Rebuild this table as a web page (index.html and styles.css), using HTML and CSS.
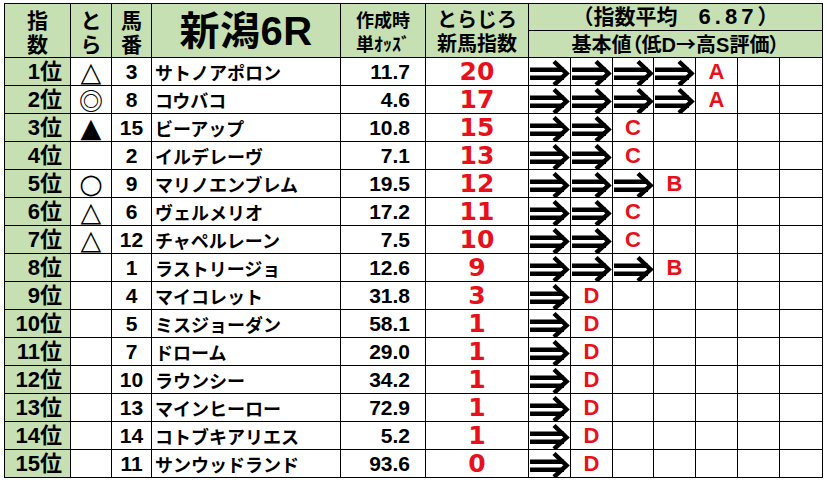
FILE: index.html
```html
<!DOCTYPE html>
<html lang="ja">
<head>
<meta charset="utf-8">
<title>新潟6R</title>
<link rel="stylesheet" href="styles.css">
</head>
<body>
<svg class="defs" width="0" height="0" aria-hidden="true">
  <symbol id="arw" viewBox="0 0 42 27">
    <rect x="1" y="9.5" width="34" height="4.5"/>
    <rect x="1" y="17.5" width="34" height="4.5"/>
    <polyline points="25,3.5 37.5,15.5 25,27" fill="none" stroke="#000" stroke-width="4.5"/>
  </symbol>
</svg>
<table class="sheet">
  <colgroup>
    <col class="w-rank"><col class="w-mark"><col class="w-num"><col class="w-name"><col class="w-odds"><col class="w-idx">
    <col class="w-g"><col class="w-g"><col class="w-g3"><col class="w-g"><col class="w-g"><col class="w-g"><col class="w-g7">
  </colgroup>
  <thead>
    <tr class="h1">
      <th rowspan="2" class="hd-two"><span class="ln">指</span><span class="ln">数</span></th>
      <th rowspan="2" class="hd-two"><span class="ln">と</span><span class="ln">ら</span></th>
      <th rowspan="2" class="hd-two"><span class="ln">馬</span><span class="ln">番</span></th>
      <th rowspan="2" class="hd-title">新潟6R</th>
      <th rowspan="2" class="hd-odds"><span class="ln">作成時</span><span class="ln">単ｵｯｽﾞ</span></th>
      <th rowspan="2" class="hd-idx"><span class="ln">とらじろ</span><span class="ln">新馬指数</span></th>
      <th colspan="7" class="hd-avg">（指数平均　<span class="avg-num">6.87</span>）</th>
    </tr>
    <tr class="h2">
      <th colspan="7" class="hd-base">基本値（低D<span class="cjk-arrow">→</span>高S評価）</th>
    </tr>
  </thead>
  <tbody>
    <tr><td class="rank">1位</td><td class="mark">△</td><td class="num">3</td><td class="name">サトノアポロン</td><td class="odds">11.7</td><td class="idx">20</td>
      <td class="arr"><svg><use href="#arw"/></svg></td><td class="arr"><svg><use href="#arw"/></svg></td><td class="arr"><svg><use href="#arw"/></svg></td><td class="arr"><svg><use href="#arw"/></svg></td><td class="grade">A</td><td></td><td></td></tr>
    <tr><td class="rank">2位</td><td class="mark dbl">◎</td><td class="num">8</td><td class="name">コウバコ</td><td class="odds">4.6</td><td class="idx">17</td>
      <td class="arr"><svg><use href="#arw"/></svg></td><td class="arr"><svg><use href="#arw"/></svg></td><td class="arr"><svg><use href="#arw"/></svg></td><td class="arr"><svg><use href="#arw"/></svg></td><td class="grade">A</td><td></td><td></td></tr>
    <tr><td class="rank">3位</td><td class="mark">▲</td><td class="num">15</td><td class="name">ビーアップ</td><td class="odds">10.8</td><td class="idx">15</td>
      <td class="arr"><svg><use href="#arw"/></svg></td><td class="arr"><svg><use href="#arw"/></svg></td><td class="grade">C</td><td></td><td></td><td></td><td></td></tr>
    <tr><td class="rank">4位</td><td class="mark"></td><td class="num">2</td><td class="name">イルデレーヴ</td><td class="odds">7.1</td><td class="idx">13</td>
      <td class="arr"><svg><use href="#arw"/></svg></td><td class="arr"><svg><use href="#arw"/></svg></td><td class="grade">C</td><td></td><td></td><td></td><td></td></tr>
    <tr><td class="rank">5位</td><td class="mark">○</td><td class="num">9</td><td class="name">マリノエンブレム</td><td class="odds">19.5</td><td class="idx">12</td>
      <td class="arr"><svg><use href="#arw"/></svg></td><td class="arr"><svg><use href="#arw"/></svg></td><td class="arr"><svg><use href="#arw"/></svg></td><td class="grade">B</td><td></td><td></td><td></td></tr>
    <tr><td class="rank">6位</td><td class="mark">△</td><td class="num">6</td><td class="name">ヴェルメリオ</td><td class="odds">17.2</td><td class="idx">11</td>
      <td class="arr"><svg><use href="#arw"/></svg></td><td class="arr"><svg><use href="#arw"/></svg></td><td class="grade">C</td><td></td><td></td><td></td><td></td></tr>
    <tr><td class="rank">7位</td><td class="mark">△</td><td class="num">12</td><td class="name">チャペルレーン</td><td class="odds">7.5</td><td class="idx">10</td>
      <td class="arr"><svg><use href="#arw"/></svg></td><td class="arr"><svg><use href="#arw"/></svg></td><td class="grade">C</td><td></td><td></td><td></td><td></td></tr>
    <tr><td class="rank">8位</td><td class="mark"></td><td class="num">1</td><td class="name">ラストリージョ</td><td class="odds">12.6</td><td class="idx">9</td>
      <td class="arr"><svg><use href="#arw"/></svg></td><td class="arr"><svg><use href="#arw"/></svg></td><td class="arr"><svg><use href="#arw"/></svg></td><td class="grade">B</td><td></td><td></td><td></td></tr>
    <tr><td class="rank">9位</td><td class="mark"></td><td class="num">4</td><td class="name">マイコレット</td><td class="odds">31.8</td><td class="idx">3</td>
      <td class="arr"><svg><use href="#arw"/></svg></td><td class="grade">D</td><td></td><td></td><td></td><td></td><td></td></tr>
    <tr><td class="rank">10位</td><td class="mark"></td><td class="num">5</td><td class="name">ミスジョーダン</td><td class="odds">58.1</td><td class="idx">1</td>
      <td class="arr"><svg><use href="#arw"/></svg></td><td class="grade">D</td><td></td><td></td><td></td><td></td><td></td></tr>
    <tr><td class="rank">11位</td><td class="mark"></td><td class="num">7</td><td class="name">ドローム</td><td class="odds">29.0</td><td class="idx">1</td>
      <td class="arr"><svg><use href="#arw"/></svg></td><td class="grade">D</td><td></td><td></td><td></td><td></td><td></td></tr>
    <tr><td class="rank">12位</td><td class="mark"></td><td class="num">10</td><td class="name">ラウンシー</td><td class="odds">34.2</td><td class="idx">1</td>
      <td class="arr"><svg><use href="#arw"/></svg></td><td class="grade">D</td><td></td><td></td><td></td><td></td><td></td></tr>
    <tr><td class="rank">13位</td><td class="mark"></td><td class="num">13</td><td class="name">マインヒーロー</td><td class="odds">72.9</td><td class="idx">1</td>
      <td class="arr"><svg><use href="#arw"/></svg></td><td class="grade">D</td><td></td><td></td><td></td><td></td><td></td></tr>
    <tr><td class="rank">14位</td><td class="mark"></td><td class="num">14</td><td class="name">コトブキアリエス</td><td class="odds">5.2</td><td class="idx">1</td>
      <td class="arr"><svg><use href="#arw"/></svg></td><td class="grade">D</td><td></td><td></td><td></td><td></td><td></td></tr>
    <tr><td class="rank">15位</td><td class="mark"></td><td class="num">11</td><td class="name">サンウッドランド</td><td class="odds">93.6</td><td class="idx">0</td>
      <td class="arr"><svg><use href="#arw"/></svg></td><td class="grade">D</td><td></td><td></td><td></td><td></td><td></td></tr>
  </tbody>
</table>
</body>
</html>
```

FILE: styles.css
```css
html, body {
  margin: 0;
  padding: 0;
  background: #ffffff;
}

body {
  font-family: "Liberation Sans", "Noto Sans CJK JP", sans-serif;
  font-weight: 700;
  color: #000;
  overflow: hidden;
}

.defs {
  position: absolute;
  width: 0;
  height: 0;
}

.sheet {
  border-collapse: collapse;
  table-layout: fixed;
  width: 818px;
  margin: 3px 0 0 4px;
}

.w-rank { width: 66px; }
.w-mark { width: 41px; }
.w-num { width: 40px; }
.w-name { width: 189px; }
.w-odds { width: 85px; }
.w-idx { width: 103px; }
.w-g { width: 42px; }
.w-g3 { width: 41px; }
.w-g7 { width: 43px; }

.sheet th,
.sheet td {
  border: 1px solid #000;
  padding: 0;
  white-space: nowrap;
  vertical-align: middle;
}

.sheet thead th {
  background: #c6e0b4;
  font-weight: 700;
  text-align: center;
}

.h1 { height: 27px; }
.h2 { height: 27px; }
.sheet tbody tr { height: 28px; }

.ln {
  display: block;
  height: 24px;
  overflow: visible;
}

.hd-two {
  font-family: "Noto Sans CJK JP", sans-serif;
  font-size: 21px;
  line-height: 24px;
}

.hd-title {
  font-size: 40px;
  line-height: 42px;
  letter-spacing: 0.5px;
}

.hd-odds {
  font-family: "Noto Sans CJK JP", sans-serif;
  font-size: 18px;
  line-height: 24px;
}

.hd-idx {
  font-family: "Noto Sans CJK JP", sans-serif;
  font-size: 20px;
  line-height: 24px;
}

.hd-avg {
  font-size: 21px;
  line-height: 24px;
}

.avg-num {
  font-size: 22px;
  letter-spacing: 4px;
}

.hd-base {
  font-size: 20px;
  line-height: 24px;
  font-feature-settings: "palt";
}

.cjk-arrow {
  font-family: "Noto Sans CJK JP", sans-serif;
  font-weight: 700;
}

.rank {
  background: #c6e0b4;
  text-align: right;
  padding-right: 8px !important;
  font-size: 22px;
  line-height: 26px;
}

.mark {
  font-family: "DejaVu Sans", "Noto Sans CJK JP", sans-serif;
  font-weight: 700;
  font-size: 27px;
  line-height: 26px;
  text-align: center;
}

.mark.dbl {
  font-family: "Noto Sans CJK JP", sans-serif;
  font-size: 24px;
}

.num {
  text-align: center;
  font-size: 21px;
  font-weight: 700;
  line-height: 26px;
}

.name {
  font-family: "Noto Sans CJK JP", sans-serif;
  font-size: 18px;
  line-height: 26px;
  padding-left: 3px !important;
  overflow: hidden;
}

.odds {
  text-align: right;
  padding-right: 15px !important;
  font-size: 21px;
  font-weight: 700;
  line-height: 26px;
}

.idx {
  text-align: center;
  color: #e8101a;
  font-family: "DejaVu Sans", sans-serif;
  font-size: 25px;
  font-weight: 700;
  line-height: 26px;
}

.arr svg {
  display: block;
  width: 42px;
  height: 27px;
  overflow: visible;
}

.grade {
  text-align: center;
  color: #e8101a;
  font-size: 22px;
  line-height: 26px;
}
```
